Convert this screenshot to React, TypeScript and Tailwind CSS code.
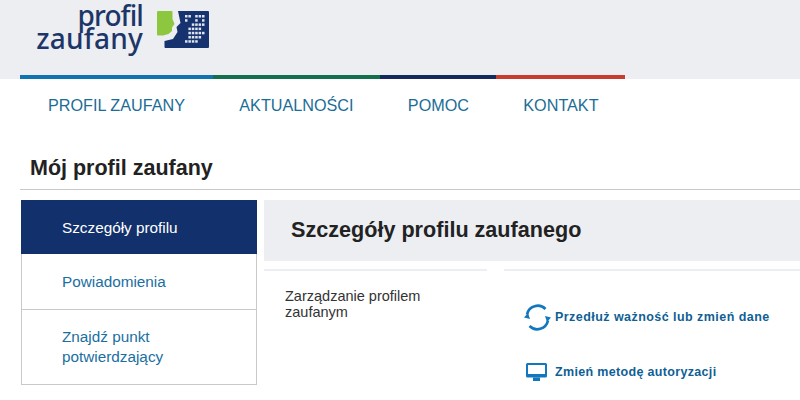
import React from 'react';

const navItems = ['PROFIL ZAUFANY', 'AKTUALNOŚCI', 'POMOC', 'KONTAKT'];

function LogoMark() {
  const dots = ['110111', '100101', '001111', '011110', '011111', '011110', '111100'];
  return (
    <svg width="52" height="39" viewBox="0 0 52 39" className="block">
      <path d="M1 1H14.500Q15.500 1 15.500 2V9L17.500 14L15 17.500V21L11.500 24L6 25.500H1Q0 25.500 0 24.500V2Q0 1 1 1Z" fill="#8dc63f" />
      <path d="M21 1H51Q52 1 52 2V37Q52 38 51 38H8.500Q7.500 38 7.500 37V31L16 29L20.500 22L19.500 17L23.500 13Z" fill="#17336f" />
      {dots.map((row, y) =>
        row.split('').map((c, x) =>
          c === '1' ? <rect key={`${x}-${y}`} x={28 + x * 3.4} y={5 + y * 4.2} width="2.500" height="2.500" fill="#dfe5f0" /> : null,
        ),
      )}
    </svg>
  );
}

function RefreshIcon() {
  return (
    <svg width="27" height="27" viewBox="0 0 27 27" fill="none" className="shrink-0">
      <path d="M3 10.500A11 11 0 0 1 21.500 5" stroke="#1277bd" strokeWidth="2.700" />
      <path d="M24 16.500A11 11 0 0 1 5.500 22" stroke="#1277bd" strokeWidth="2.700" />
      <path d="M0 13.500L4 9L6 15Z" fill="#1277bd" />
      <path d="M27 13.500L23 18L21 12Z" fill="#1277bd" />
    </svg>
  );
}

function MonitorIcon() {
  return (
    <svg width="21" height="18" viewBox="0 0 21 18" className="shrink-0">
      <path fillRule="evenodd" d="M1.500 0H19.500Q21 0 21 1.500V13Q21 14.500 19.500 14.500H1.500Q0 14.500 0 13V1.500Q0 0 1.500 0ZM2 2V11H19V2Z" fill="#1277bd" />
      <rect x="7" y="14.500" width="7" height="3.500" fill="#1277bd" />
    </svg>
  );
}

export default function App() {
  return (
    <div className="w-[800px] h-[400px] overflow-hidden bg-white font-['Liberation_Sans',Arial,sans-serif]">
      <header className="h-[79px] bg-[#eceef2] pl-5 flex flex-col justify-between">
        <div className="flex items-start pl-[15px]">
          <div className="w-[108px] pt-1 text-right font-['Noto_Sans',sans-serif] text-[28px] leading-[23px] font-medium text-[#1d3668]">
            <div className="tracking-[-0.9px]">profil</div>
            <div className="tracking-[0.2px]">zaufany</div>
          </div>
          <div className="ml-[14px] mt-[10px]">
            <LogoMark />
          </div>
        </div>
        <div className="flex h-1 w-[605px]">
          <div className="w-[193px] bg-[#0f75b0]" />
          <div className="w-[167px] bg-[#12704f]" />
          <div className="w-[116px] bg-[#16295f]" />
          <div className="flex-1 bg-[#c83c32]" />
        </div>
      </header>

      <nav className="flex h-[52px] items-center gap-[54.300px] pl-12 text-[16.200px] text-[#1b6d96]">
        {navItems.map(item => (
          <span key={item}>{item}</span>
        ))}
      </nav>

      <div className="ml-5 h-[59px] border-b border-[#c9c9c9] pl-[10px] pt-[22px] text-[21.500px] leading-[30px] font-bold text-[#222222]">
        Mój profil zaufany
      </div>

      <div className="ml-[21px] mt-[10px] flex gap-[7px]">
        <div className="w-[236px] h-[185px] border border-t-0 border-[#c9c9c9] text-[15.300px] text-[#1a6f9f]">
          <div className="-mx-px flex h-[54px] items-center bg-[#12306b] pl-[41px] pt-[2px] text-white">Szczegóły profilu</div>
          <div className="flex h-[56px] items-center border-b border-[#c9c9c9] pl-10 pt-[2px]">Powiadomienia</div>
          <div className="pl-10 pt-[17px] leading-[20px]">
            Znajdź punkt
            <br />
            potwierdzający
          </div>
        </div>

        <div className="flex-1">
          <div className="flex h-[61px] items-center bg-[#eceef2] pl-[27px] text-[21.600px] font-bold text-[#222222]">
            Szczegóły profilu zaufanego
          </div>
          <div className="mt-2 flex gap-[17px]">
            <div className="w-[223px] border-t-2 border-[#eceef2] pl-[21px] pt-[17px] text-[14.500px] leading-[16px] text-[#333333]">
              Zarządzanie profilem
              <br />
              zaufanym
            </div>
            <div className="flex-1 border-t-2 border-[#eceef2] pl-5 pt-[33px] text-[12.500px] font-bold tracking-[0.45px] text-[#0f5f95]">
              <div className="flex items-center gap-[4px]">
                <RefreshIcon />
                <span>Przedłuż ważność lub zmień dane</span>
              </div>
              <div className="mt-[32px] flex items-center gap-[8px] pl-[2px] tracking-[0.33px]">
                <MonitorIcon />
                <span>Zmień metodę autoryzacji</span>
              </div>
            </div>
          </div>
        </div>
      </div>
    </div>
  );
}
